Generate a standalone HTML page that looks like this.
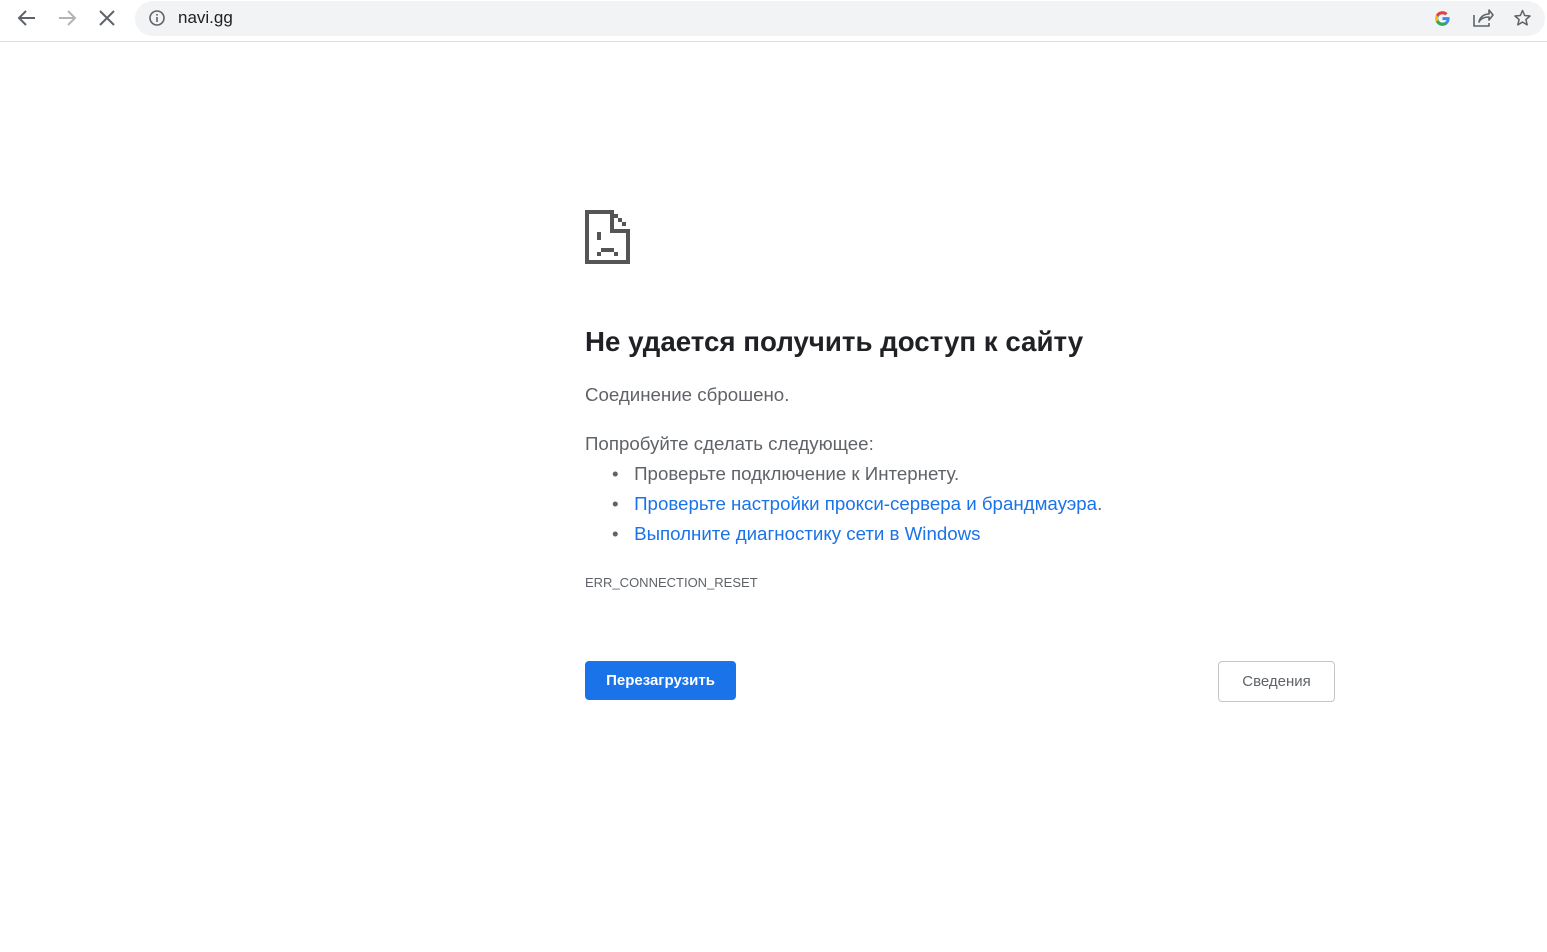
<!DOCTYPE html>
<html><head><meta charset="utf-8"><style>
body{margin:0;width:1547px;height:952px;background:#fff;font-family:"Liberation Sans","DejaVu Sans",sans-serif;position:relative;overflow:hidden}
.bar{position:absolute;left:0;top:0;width:1547px;height:41px;border-bottom:1px solid #dadce0;background:#fff}
.omni{position:absolute;left:135px;top:1px;width:1410px;height:35px;border-radius:18px;background:#f1f3f4}
.url{position:absolute;left:178px;top:8px;font-size:17px;color:#202124}
.t{position:absolute;color:#5f6368;font-size:18.7px;white-space:nowrap}
a{color:#1a73e8;text-decoration:none}
</style></head><body>
<div class="bar">
<svg style="position:absolute;left:16px;top:8px" width="24" height="20" viewBox="0 0 24 20"><path d="M19 10H4M10 3l-7 7 7 7" stroke="#5f6368" stroke-width="2" fill="none"/></svg>
<svg style="position:absolute;left:56px;top:8px" width="24" height="20" viewBox="0 0 24 20"><path d="M3 10h15M12 3l7 7-7 7" stroke="#b1b3b6" stroke-width="2" fill="none"/></svg>
<svg style="position:absolute;left:98px;top:9px" width="18" height="18" viewBox="0 0 18 18"><path d="M2 2l14 14M16 2L2 16" stroke="#5f6368" stroke-width="2"/></svg>
<div class="omni"></div>
<svg style="position:absolute;left:148px;top:9px" width="18" height="18" viewBox="0 0 18 18"><circle cx="9" cy="9" r="7" stroke="#5f6368" stroke-width="1.6" fill="none"/><rect x="8.2" y="8" width="1.6" height="5" fill="#5f6368"/><rect x="8.2" y="5" width="1.6" height="1.6" fill="#5f6368"/></svg>
<div class="url">navi.gg</div>
<svg style="position:absolute;left:1434px;top:10px" width="17" height="17" viewBox="0 0 48 48"><path d="M43.6 20H24v8.5h11.3C34 33 30 36 24 36c-6.6 0-12-5.4-12-12s5.4-12 12-12c3 0 5.8 1.1 7.9 3l6-6C34.4 5.7 29.5 3.5 24 3.5 12.7 3.5 3.5 12.7 3.5 24S12.7 44.5 24 44.5c11 0 20-8 20-20.5 0-1.3-.1-2.7-.4-4z" fill="#4285f4"/><path d="M6 13l7 5c1.8-4 6-6 11-6 3 0 5.8 1.1 7.9 3l6-6C34.4 5.7 29.5 3.5 24 3.5 16 3.5 9.3 7.5 6 13z" fill="#ea4335"/><path d="M24 44.5c5.3 0 10-1.8 13.5-5l-6.5-5.5C29 35.3 26.6 36 24 36c-5.9 0-10-3.4-11.3-8l-7 5.4C9 40 16 44.5 24 44.5z" fill="#34a853"/><path d="M12.7 28c-.5-1.3-.7-2.6-.7-4s.2-2.7.7-4l-7-5.4C4.3 17.4 3.5 20.6 3.5 24s.8 6.6 2.200 9.4z" fill="#fbbc05"/></svg>
<svg style="position:absolute;left:1472px;top:8px" width="22" height="20" viewBox="0 0 22 20"><path d="M2 7v11h15v-3M7 14c1-5 5-8 10-8V2l4 5-4 5V9c-4 0-8 1-10 5z" stroke="#5f6368" stroke-width="1.6" fill="none" stroke-linejoin="round"/></svg>
<svg style="position:absolute;left:1512px;top:8px" width="21" height="20" viewBox="0 0 24 24"><path d="M12 3l2.6 6 6.4.6-4.9 4.3 1.5 6.3L12 16.9l-5.6 3.3 1.5-6.3L3 9.6 9.4 9z" stroke="#5f6368" stroke-width="1.8" fill="none" stroke-linejoin="round"/></svg>
</div>
<svg style="position:absolute;left:585px;top:209px" width="46" height="56" viewBox="0 0 46 56" shape-rendering="crispEdges"><g fill="#555"><rect x="0" y="1" width="4" height="54"/><rect x="0" y="1" width="29" height="4"/><rect x="0" y="51" width="45" height="4"/><rect x="41" y="20" width="4" height="35"/><rect x="25" y="1" width="4" height="23"/><rect x="25" y="20" width="20" height="4"/><rect x="29" y="5" width="4" height="4"/><rect x="33" y="9" width="4" height="4"/><rect x="37" y="13" width="4" height="4"/><rect x="12" y="23" width="4" height="8"/><rect x="12" y="43" width="4" height="4"/><rect x="16" y="39" width="13" height="4"/><rect x="29" y="43" width="4" height="4"/></g></svg>
<div class="t" style="left:585px;top:326px;font-size:27.7px;color:#202124;font-weight:bold">Не удается получить доступ к сайту</div>
<div class="t" style="left:585px;top:384px">Соединение сброшено.</div>
<div class="t" style="left:585px;top:433px">Попробуйте сделать следующее:</div>
<div class="t" style="left:612px;top:463px">•&nbsp;&nbsp;&nbsp;Проверьте подключение к Интернету.</div>
<div class="t" style="left:612px;top:493px">•&nbsp;&nbsp;&nbsp;<a>Проверьте настройки прокси-сервера и брандмауэра</a>.</div>
<div class="t" style="left:612px;top:523px">•&nbsp;&nbsp;&nbsp;<a>Выполните диагностику сети в Windows</a></div>
<div class="t" style="left:585px;top:575px;font-size:13px">ERR_CONNECTION_RESET</div>
<div style="position:absolute;left:585px;top:661px;width:151px;height:39px;background:#1a73e8;border-radius:4px;color:#fff;font-size:15px;line-height:39px;text-align:center;font-weight:bold">Перезагрузить</div>
<div style="position:absolute;left:1218px;top:661px;width:115px;height:39px;border:1px solid #c4c7ca;border-radius:4px;color:#5f6368;font-size:15px;line-height:39px;text-align:center">Сведения</div>
</body></html>
